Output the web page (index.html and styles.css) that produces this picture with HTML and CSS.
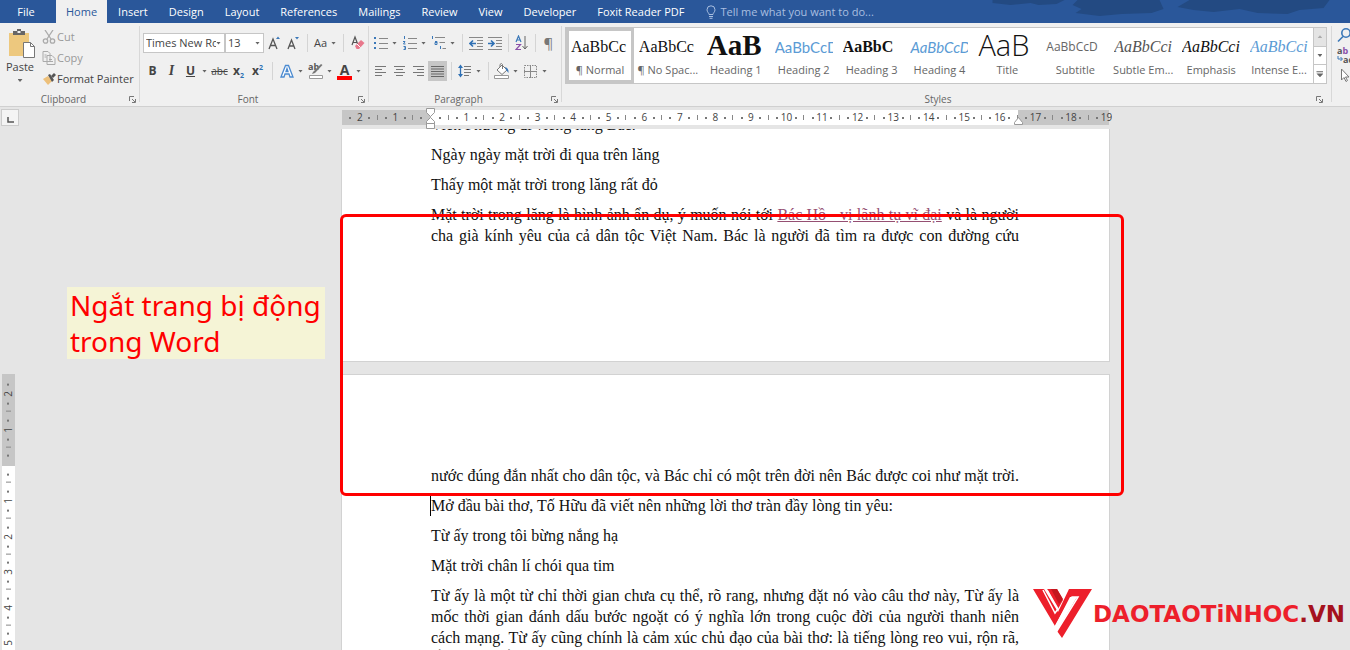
FILE: index.html
```html
<!DOCTYPE html>
<html lang="vi">
<head>
<meta charset="utf-8">
<title>Word</title>
<link rel="stylesheet" href="styles.css">
</head>
<body>
<nav class="tabs">
  <button class="tab file">File</button>
  <button class="tab active">Home</button>
  <button class="tab">Insert</button>
  <button class="tab">Design</button>
  <button class="tab">Layout</button>
  <button class="tab">References</button>
  <button class="tab">Mailings</button>
  <button class="tab">Review</button>
  <button class="tab">View</button>
  <button class="tab">Developer</button>
  <button class="tab">Foxit Reader PDF</button>
  <label class="tell">
    <svg width="10" height="14" viewBox="0 0 10 14" fill="none" stroke="#a9bfe0"><path d="M3 9.500C3 8 1 7 1 4.800a4 4 0 0 1 8 0C9 7 7 8 7 9.500zM3 11.500h4M3.500 13.300h3"/></svg>
    <input type="text" placeholder="Tell me what you want to do..." aria-label="Tell me what you want to do">
  </label>
  <svg class="art" viewBox="0 0 370 23" preserveAspectRatio="xMaxYMin meet" fill="#234a82"><path d="M13 0h72l-8 4-18 1-8-2-20 2-18-2zM93 5l5-5h82l4 9-12 4-30 1-22 2-24-3 6-4zM198 7l12-7h140l-6 8-24 2-12 4-30-1-18-4-26 3-20-2z"/></svg>
</nav>

<header class="ribbon">
  <section class="group clipboard">
    <div class="clip-body">
      <button class="paste">
        <svg width="28" height="30" viewBox="0 0 28 30"><path d="M1 4h20v23H1z" fill="#edc87e"/><path d="M5 6V2h4V0h4v2h4v4z" fill="#666"/><path d="M9.500 2h3v2h-3z" fill="#eee"/><path d="M15.500 13.500h7l4 4v11h-11z" fill="#fff" stroke="#777"/><path d="M22.500 13.500v4h4" fill="none" stroke="#777"/></svg>
        <span>Paste</span><i class="car"></i>
      </button>
      <div class="clip-list">
        <button class="off"><svg width="14" height="14" viewBox="0 0 14 14" fill="none" stroke="#aaa" stroke-width="1.300"><path d="M3 0l6 9M11 0L5 9"/><circle cx="3.500" cy="11" r="2.200"/><circle cx="10.500" cy="11" r="2.200"/></svg>Cut</button>
        <button class="off"><svg width="14" height="14" viewBox="0 0 14 14" fill="#f0f0f0" stroke="#aaa"><path d="M1 .5h5l2 2v8H1zM5 4.500h5l3 3v6H5zM7 8.500h3M7 10.500h4M2.500 4h2M2.500 6h2"/></svg>Copy</button>
        <button><svg width="14" height="14" viewBox="0 0 14 14"><path d="M1 7l5-3 4 5-4 4z" fill="#edc07a"/><path d="M6 3l2-1 4 6-2 2z" fill="#555"/><path d="M9 4l3-3 2 2-3 3z" fill="#555"/></svg>Format Painter</button>
      </div>
    </div>
    <footer>Clipboard<svg class="dl" viewBox="0 0 7 7"><path d="M.5 5V.5H5M3 3l3 3M6.500 3v3.500H3"/></svg></footer>
  </section>

  <section class="group font">
    <div class="row">
      <span class="combo name"><select aria-label="Font"><option>Times New Roman</option></select><i class="car"></i></span>
      <span class="combo size"><select aria-label="Font size"><option>13</option></select><i class="car"></i></span>
      <button class="b" aria-label="Grow font"><svg width="14" height="16" viewBox="0 0 14 16" fill="none"><path d="M2 14L6 4l4 10M3.500 10.500h5" stroke="#555" stroke-width="1.300"/><path d="M9 4l2-2.500L13 4z" fill="#3b78b8"/></svg></button>
      <button class="b" aria-label="Shrink font"><svg width="14" height="16" viewBox="0 0 14 16" fill="none"><path d="M2 14l3.500-9L9 14M3.300 11h4.500" stroke="#555" stroke-width="1.300"/><path d="M9 2l2 2.500L13 2z" fill="#3b78b8"/></svg></button>
      <i class="sep"></i>
      <button class="b wide">Aa<i class="car"></i></button>
      <i class="sep"></i>
      <button class="b" aria-label="Clear formatting"><svg width="14" height="16" viewBox="0 0 14 16" fill="none"><path d="M1 10l3-8 3 8M2 7.500h4" stroke="#555" stroke-width="1.200"/><path d="M4 11l6-6 3.500 3L8 14H5.500z" fill="#e8788c"/><path d="M6 9l3.500 3.500" stroke="#fff"/></svg></button>
    </div>
    <div class="row">
      <button class="b"><b>B</b></button>
      <button class="b ital"><b>I</b></button>
      <button class="b"><b><u>U</u></b></button><i class="car c"></i>
      <button class="b abc"><s>abc</s></button>
      <button class="b"><b>x<sub>2</sub></b></button>
      <button class="b"><b>x<sup>2</sup></b></button>
      <i class="sep"></i>
      <button class="b" aria-label="Text effects"><svg width="14" height="15" viewBox="0 0 14 15" fill="#fff" stroke="#4b8ad0" stroke-width="1.300"><path d="M1 13L5.500 1.500h3L13 13h-3l-1-3H5l-1 3zM6 7.500h2L7 4.500z"/></svg></button><i class="car c"></i>
      <button class="b" aria-label="Highlight"><svg width="16" height="16" viewBox="0 0 16 16"><text x="0" y="7" font-size="9" font-weight="700" fill="#555">ab</text><path d="M14.500 2L7 10l-3 1 1-2 8-8z" fill="#777"/><path d="M1.500 12.500h13v3h-13z" fill="#fff" stroke="#999"/></svg></button><i class="car c"></i>
      <button class="b fc"><b>A</b></button><i class="car c"></i>
    </div>
    <footer>Font<svg class="dl" viewBox="0 0 7 7"><path d="M.5 5V.5H5M3 3l3 3M6.500 3v3.500H3"/></svg></footer>
  </section>

  <section class="group para">
    <div class="row">
      <button class="b" aria-label="Bullets"><svg width="14" height="14" viewBox="0 0 14 14"><path d="M0 1h2v2H0zM0 6h2v2H0zM0 11h2v2H0z" fill="#3b78b8"/><path d="M5 2.500h9M5 7.500h9M5 12.500h9" stroke="#888"/></svg></button><i class="car c"></i>
      <button class="b" aria-label="Numbering"><svg width="14" height="14" viewBox="0 0 14 14"><path d="M1.500 0v3M0 5.500h2L.5 8H2.500M.5 10.500h2v3h-2M1 12h1" stroke="#3b78b8" fill="none"/><path d="M5 2.500h9M5 7.500h9M5 12.500h9" stroke="#888"/></svg></button><i class="car c"></i>
      <button class="b" aria-label="Multilevel list"><svg width="15" height="14" viewBox="0 0 15 14"><path d="M1.500 0v3M4 5.500h2v3H4v-2h2M9.500 10v3" stroke="#3b78b8" fill="none"/><path d="M4 1.500h10M8.500 6.500H14M11.500 12.500H15" stroke="#888"/></svg></button><i class="car c"></i>
      <i class="sep"></i>
      <button class="b" aria-label="Decrease indent"><svg width="14" height="13" viewBox="0 0 14 13"><path d="M0 .5h14M8 3.500h6M8 6.500h6M8 9.500h6M0 12.500h14" stroke="#888"/><path d="M7 6.500H1M4 3.500l-3 3 3 3" stroke="#2f70b4" stroke-width="1.600" fill="none"/></svg></button>
      <button class="b" aria-label="Increase indent"><svg width="14" height="13" viewBox="0 0 14 13"><path d="M0 .5h14M8 3.500h6M8 6.500h6M8 9.500h6M0 12.500h14" stroke="#888"/><path d="M0 6.500h6M3 3.500l3 3-3 3" stroke="#2f70b4" stroke-width="1.600" fill="none"/></svg></button>
      <i class="sep"></i>
      <button class="b" aria-label="Sort"><svg width="14" height="16" viewBox="0 0 14 16" fill="none"><path d="M1 7l2.500-6L6 7M2 5h3" stroke="#3b78b8" stroke-width="1.200"/><path d="M1 9.500h4.500L1 14.500h5" stroke="#8a4fa8" stroke-width="1.200"/><path d="M10 1v13M7.500 11l2.500 3 2.500-3" stroke="#666"/></svg></button>
      <i class="sep"></i>
      <button class="b pil">¶</button>
    </div>
    <div class="row">
      <button class="b" aria-label="Align left"><svg width="11" height="10" viewBox="0 0 11 10"><path d="M0 .5h11M0 3.500h7M0 6.500h11M0 9.500h7" stroke="#777"/></svg></button>
      <button class="b" aria-label="Center"><svg width="11" height="10" viewBox="0 0 11 10"><path d="M0 .5h11M2 3.500h7M0 6.500h11M2 9.500h7" stroke="#777"/></svg></button>
      <button class="b" aria-label="Align right"><svg width="11" height="10" viewBox="0 0 11 10"><path d="M0 .5h11M4 3.500h7M0 6.500h11M4 9.500h7" stroke="#777"/></svg></button>
      <button class="b on" aria-label="Justify"><svg width="13" height="11" viewBox="0 0 13 11"><path d="M0 .5h13M0 3h13M0 5.500h13M0 8h13M0 10.500h13" stroke="#666"/></svg></button>
      <i class="sep"></i>
      <button class="b" aria-label="Line spacing"><svg width="14" height="14" viewBox="0 0 14 14"><path d="M0 4l2.500-3.500L5 4zM0 10l2.500 3.500L5 10z" fill="#2f70b4"/><path d="M2.500 3v8" stroke="#2f70b4" stroke-width="1.300"/><path d="M6 2.500h7M6 5.500h7M6 8.500h7M6 11.500h5" stroke="#777"/></svg></button><i class="car c"></i>
      <i class="sep"></i>
      <button class="b" aria-label="Shading"><svg width="16" height="16" viewBox="0 0 16 16"><path d="M3 7l5-5 5 5-5 4.500zM6 4V1.500Q7.500-.5 8.500 1.500V6" fill="#fff" stroke="#777"/><path d="M11 4q4 1 3.500 6Q13 8 12 7z" fill="#3b78b8"/><path d="M.5 12.500h14v3H.5z" fill="#fff" stroke="#999"/></svg></button><i class="car c"></i>
      <button class="b" aria-label="Borders"><svg width="13" height="13" viewBox="0 0 13 13" fill="none" stroke="#888"><path d="M.5.5h12v12H.5z" stroke-dasharray="1.500 1"/><path d="M6.500 0v13M0 6.500h13"/></svg></button><i class="car c"></i>
    </div>
    <footer>Paragraph<svg class="dl" viewBox="0 0 7 7"><path d="M.5 5V.5H5M3 3l3 3M6.500 3v3.500H3"/></svg></footer>
  </section>

  <section class="group styles">
    <div class="gallery">
      <button class="st sel"><span class="pv tnr">AaBbCc</span><span>¶ Normal</span></button>
      <button class="st"><span class="pv tnr">AaBbCc</span><span>¶ No Spac...</span></button>
      <button class="st"><span class="pv h1">AaB</span><span>Heading 1</span></button>
      <button class="st"><span class="pv cal">AaBbCcD</span><span>Heading 2</span></button>
      <button class="st"><span class="pv tnr bold">AaBbC</span><span>Heading 3</span></button>
      <button class="st"><span class="pv cal it">AaBbCcD</span><span>Heading 4</span></button>
      <button class="st"><span class="pv title">AaB</span><span>Title</span></button>
      <button class="st"><span class="pv subt">AaBbCcD</span><span>Subtitle</span></button>
      <button class="st"><span class="pv tnr it soft">AaBbCci</span><span>Subtle Em...</span></button>
      <button class="st"><span class="pv tnr it">AaBbCci</span><span>Emphasis</span></button>
      <button class="st"><span class="pv tnr it blue">AaBbCci</span><span>Intense E...</span></button>
      <div class="scroll">
        <button class="dim" aria-label="Up"><i class="car up"></i></button>
        <button aria-label="Down"><i class="car"></i></button>
        <button aria-label="More"><i class="car bar"></i></button>
      </div>
    </div>
    <footer>Styles<svg class="dl" viewBox="0 0 7 7"><path d="M.5 5V.5H5M3 3l3 3M6.500 3v3.500H3"/></svg></footer>
  </section>

  <section class="group edit">
    <svg width="16" height="15" viewBox="0 0 16 15" fill="none" stroke="#3b78b8" stroke-width="1.600"><circle cx="9" cy="5" r="4.200"/><path d="M6 8.500L1 13.500"/></svg>
    <svg width="16" height="17" viewBox="0 0 16 17"><text x="0" y="7" font-size="9" font-weight="700" fill="#555">a<tspan fill="#8a4fa8">b</tspan></text><text x="6" y="16" font-size="9" font-weight="700" fill="#555">ac</text><path d="M1 9v3h4M3.500 10l2 2-2 2" stroke="#3b78b8" fill="none"/></svg>
    <svg width="16" height="15" viewBox="0 0 16 15" fill="#fff" stroke="#777"><path d="M4.500 1v11l2.500-2.500 2 4 1.500-1-2-3.500h3.500z"/></svg>
  </section>
</header>

<div class="ruler-row">
  <div class="corner"><button aria-label="Tab stop"><svg width="7" height="6" viewBox="0 0 7 6"><path d="M1 0v5h6" fill="none" stroke="#555" stroke-width="1.500"/></svg></button></div>
  <div class="hruler">
    <div class="cells">
      <span>2</span><span>1</span><span></span><span>1</span><span>2</span><span>3</span><span>4</span><span>5</span><span>6</span><span>7</span><span>8</span><span>9</span><span>10</span><span>11</span><span>12</span><span>13</span><span>14</span><span>15</span><span>16</span><span>17</span><span>18</span><span>19</span>
    </div>
    <svg class="ind first" width="10" height="22" viewBox="0 0 10 22" fill="#fff" stroke="#999"><path d="M.5.5h8v4l-4 4-4-4zM.5 20.500v-5h8v5zM.5 15.500v-2l4-4 4 4v2z"/></svg>
    <svg class="ind last" width="10" height="22" viewBox="0 0 10 22" fill="#fff" stroke="#999"><path d="M.5 16.500v-2l4-5 4 5v2z"/></svg>
  </div>
</div>

<main class="canvas">
  <aside class="side">
    <div class="vruler"><span>2</span><span>1</span><span></span><span>1</span><span>2</span><span>3</span><span>4</span><span>5</span></div>
  </aside>
  <div class="pages">
    <article class="page one">
      <p>Viễn Phương đi viếng lăng Bác:</p>
      <p>Ngày ngày mặt trời đi qua trên lăng</p>
      <p>Thấy một mặt trời trong lăng rất đỏ</p>
      <p class="just">Mặt trời trong lăng là hình ảnh ẩn dụ, ý muốn nói tới <a href="#">Bác Hồ - vị lãnh tụ vĩ đại</a> và là người<br>cha già kính yêu của cả dân tộc Việt Nam. Bác là người đã tìm ra được con đường cứu</p>
    </article>
    <article class="page two">
      <p class="just">nước đúng đắn nhất cho dân tộc, và Bác chỉ có một trên đời nên Bác được coi như mặt trời.</p>
      <p class="caret">Mở đầu bài thơ, Tố Hữu đã viết nên những lời thơ tràn đầy lòng tin yêu:</p>
      <p>Từ ấy trong tôi bừng nắng hạ</p>
      <p>Mặt trời chân lí chói qua tim</p>
      <p class="just">Từ ấy là một từ chỉ thời gian chưa cụ thể, rõ rang, nhưng đặt nó vào câu thơ này, Từ ấy là<br>mốc thời gian đánh dấu bước ngoặt có ý nghĩa lớn trong cuộc đời của người thanh niên<br>cách mạng. Từ ấy cũng chính là cảm xúc chủ đạo của bài thơ: là tiếng lòng reo vui, rộn rã,</p>
      <p class="tail">đầy trong niềm vui</p>
    </article>
    <div class="frame"></div>
  </div>
  <div class="note">Ngắt trang bị động<br>trong Word</div>
  <div class="logo">
    <svg width="60" height="50" viewBox="0 0 60 50"><path d="M0 0h11l14 23 11-23h23L29 49l-5-7 20-34h-7L22 37z" fill="#ed1f2b"/><path d="M14 0h10l6 11-5 9z" fill="#ed1f2b"/><path d="M18 0h6l6 10-4 5z" fill="#c4171f"/><path d="M14 1l11 19-3 4L10 1M45 8L24 42l-2-4L39 8z" fill="none" stroke="#fff" stroke-width="1.500"/></svg>
    <span>DAOTAOTiNHOC<em>.VN</em></span>
  </div>
</main>
</body>
</html>
```
FILE: styles.css
```css
* { box-sizing: border-box; }
body {
  margin: 0;
  height: 100vh;
  overflow: hidden;
  display: flex;
  flex-direction: column;
  background: #e5e5e5;
  color: #444;
  font: 11px/14px "Open Sans", "Noto Sans", sans-serif;
}
button, input, select { font: inherit; color: inherit; border: 0; background: none; padding: 0; margin: 0; }
svg { flex: none; }

.tabs { display: flex; height: 23px; background: #2a579a; color: #fff; }
.tab { padding: 0 10px 0 11px; white-space: nowrap; }
.tab.file { width: 56px; padding: 0 4px 0 0; }
.tab.active { background: #f0f0f0; color: #2a579a; padding: 0 10px; }
.tell { display: flex; align-items: center; gap: 4px; margin-left: 12px; }
.tell input { width: 164px; }
.tell input::placeholder { color: #a9bfe0; opacity: 1; }
.tabs .art { flex: 1 1 0; min-width: 0; height: 23px; }

.ribbon { display: flex; height: 84px; background: #f0f0f0; border-bottom: 1px solid #d0d0d0; overflow: hidden; }
.group { position: relative; display: flex; flex-direction: column; flex: none; padding: 6px 0 0 3px; }
.group::after { content: ""; position: absolute; right: 0; top: 3px; bottom: 4px; width: 1px; background: #d8d8d8; }
.group footer { margin-top: auto; height: 14px; padding-right: 16px; text-align: center; font-size: 10px; color: #666; position: relative; }
.dl { position: absolute; right: 4px; top: 4px; width: 7px; height: 7px; fill: none; stroke: #777; }
.clipboard { width: 140px; }
.font { width: 229px; }
.para { width: 193px; padding-left: 2px; }
.styles { flex: 1 1 0; min-width: 0; padding: 4px 5px 0 3px; }
.edit { width: 18px; padding: 5px 0 0 5px; gap: 4px; overflow: hidden; }
.edit::after { display: none; }

.clip-body { display: flex; align-items: flex-start; gap: 4px; margin-top: -3px; }
.paste { display: flex; flex-direction: column; align-items: center; width: 34px; line-height: 15px; margin-top: 3px; }
.paste svg { margin-left: 4px; }
.paste .car { margin-top: 5px; }
.clip-list { display: flex; flex-direction: column; }
.clip-list button { display: flex; align-items: center; gap: 1px; height: 21px; white-space: nowrap; margin-left: 1px; }
.clip-list .off { color: #999; }

.car { display: block; flex: none; width: 5px; height: 3px; background: #666; clip-path: polygon(0 0, 100% 0, 50% 100%); }
.car.c { margin: 0 3px 0 2px; }
.car.up { clip-path: polygon(0 100%, 100% 100%, 50% 0); background: #aaa; }
.car.bar { width: 7px; height: 6px; clip-path: polygon(0 0, 100% 0, 100% 20%, 0 20%, 0 40%, 100% 40%, 50% 100%, 0 40%); }
.row { display: flex; align-items: center; height: 28px; }
.b { display: flex; align-items: center; justify-content: center; width: 19px; height: 20px; flex: none; }
.b b { font-size: 12px; }
.b.wide { width: 26px; gap: 4px; }
.ital b { font-family: "Liberation Serif", serif; font-style: italic; font-size: 14px; }
.abc { font-size: 10px; }
.b sub, .b sup { font-size: 7px; color: #2f70b4; line-height: 0; }
.fc b { border-bottom: 4px solid #f00; width: 15px; line-height: 13px; font-size: 14px; }
.pil { font-size: 15px; color: #777; }
.on { background: #c6c6c6; }
.sep { width: 10px; height: 18px; flex: none; background: linear-gradient(#d4d4d4, #d4d4d4) center / 1px 100% no-repeat; }
.para .sep { width: 8px; }
.combo { display: flex; align-items: center; height: 20px; background: #fff; border: 1px solid #c6c6c6; padding: 0 3px 0 2px; }
.combo select { appearance: none; flex: 1; min-width: 0; overflow: hidden; }
.combo.name { width: 82px; }
.combo.size { width: 39px; }

.gallery { display: flex; height: 57px; background: #fff; border: 1px solid #c6c6c6; }
.st { flex: 1 1 0; min-width: 0; display: flex; flex-direction: column; align-items: center; color: #666; border: 3px solid transparent; padding: 0; overflow: hidden; white-space: nowrap; }
.st.sel { border-color: #c6c6c6; }
.pv { display: flex; align-items: center; height: 32px; width: 58px; overflow: hidden; flex: none; color: #111; font-size: 16px; }
.tnr, .h1 { font-family: "Liberation Serif", serif; }
.bold { font-weight: 700; }
.h1 { font-weight: 700; font-size: 29px; padding-bottom: 4px; }
.cal { font-family: Lato, sans-serif; color: #5b9bd5; font-size: 15px; }
.it { font-style: italic; }
.title { font-family: "Open Sans", sans-serif; font-weight: 300; font-size: 29px; padding-bottom: 4px; }
.subt { font-size: 12px; color: #666; }
.soft { color: #555; }
.blue { color: #5b9bd5; }
.scroll { display: flex; flex-direction: column; width: 13px; border-left: 1px solid #c6c6c6; }
.scroll button { flex: 1; display: flex; align-items: center; justify-content: center; border-bottom: 1px solid #c6c6c6; }
.scroll button:last-child { border-bottom: 0; }
.scroll .dim { background: #e4e4e4; }

.ruler-row, .canvas { display: grid; grid-template-columns: minmax(0, 342px) minmax(0, 767px) minmax(0, 1fr); }
.ruler-row { height: 22px; flex: none; }
.corner button { display: flex; align-items: center; justify-content: center; width: 18px; height: 17px; margin: 2px 0 0 1px; padding-top: 4px; background: #f4f4f4; border: 1px solid #ccc; }
.hruler { position: relative; height: 15px; margin-top: 3px; background: linear-gradient(90deg, #c6c6c6 89px, #fff 89px, #fff 676px, #c6c6c6 676px); }
.cells { display: grid; grid-template-columns: repeat(22, 1fr); width: 102%; font-size: 10px; line-height: 15px; clip-path: inset(0 12px 0 0); }
.cells span { text-align: center; background:
  linear-gradient(#888, #888) right center / 1px 5px no-repeat,
  linear-gradient(#777, #777) 22% center / 2px 2px no-repeat,
  linear-gradient(#777, #777) 78% center / 2px 2px no-repeat; }
.ind { position: absolute; top: -2px; }
.ind.first { left: 84px; }
.ind.last { left: 672px; }

.canvas { position: relative; flex: 1; min-height: 0; overflow: hidden; }
.vruler { display: grid; grid-template-rows: repeat(8, 1fr); width: 13px; height: 287px; margin: 245px 0 0 2px; padding-top: 2px; font-size: 10px; line-height: 13px; background: linear-gradient(#c6c6c6 92px, #fff 92px); }
.vruler span { writing-mode: vertical-rl; text-align: center; transform: rotate(180deg); background:
  linear-gradient(#888, #888) center top / 5px 1px no-repeat,
  linear-gradient(#777, #777) center 22% / 2px 2px no-repeat,
  linear-gradient(#777, #777) center 78% / 2px 2px no-repeat; }

.pages { position: relative; display: flex; flex-direction: column; gap: 14px; min-width: 0; }
.page { background: #fff; color: #111; padding: 0 90px 0 89px; box-shadow: 0 0 0 1px #d2d2d2; font: 16px/21px "Liberation Serif", serif; flex: none; }
.page.one { height: 232px; overflow: hidden; }
.page.one p:first-child { margin-top: -15px; }
.page.two { padding-top: 90px; }
.page p { margin: 0 0 9px; white-space: nowrap; }
.page .just { text-align: justify; text-align-last: justify; }
.page .just:has(+ .tail) { margin-bottom: -2px; }
.page a { color: #954f72; }
.caret { box-shadow: -1px 0 0 #000; }
.frame { position: absolute; left: -2px; right: -15px; top: 85px; height: 282px; border: 3px solid #f00; border-radius: 6px; }
.note { position: absolute; left: 67px; top: 158px; padding: 0 4px 0 3px; background: #f5f4d6; color: #f00; font: 28px/36px "Noto Sans", sans-serif; white-space: nowrap; }
.logo { position: absolute; right: 5px; bottom: 11px; display: flex; align-items: center; color: #ed1f2b; font: 700 23px/24px "DejaVu Sans", sans-serif; }
.logo em { font-style: normal; color: #a5121d; }
```
